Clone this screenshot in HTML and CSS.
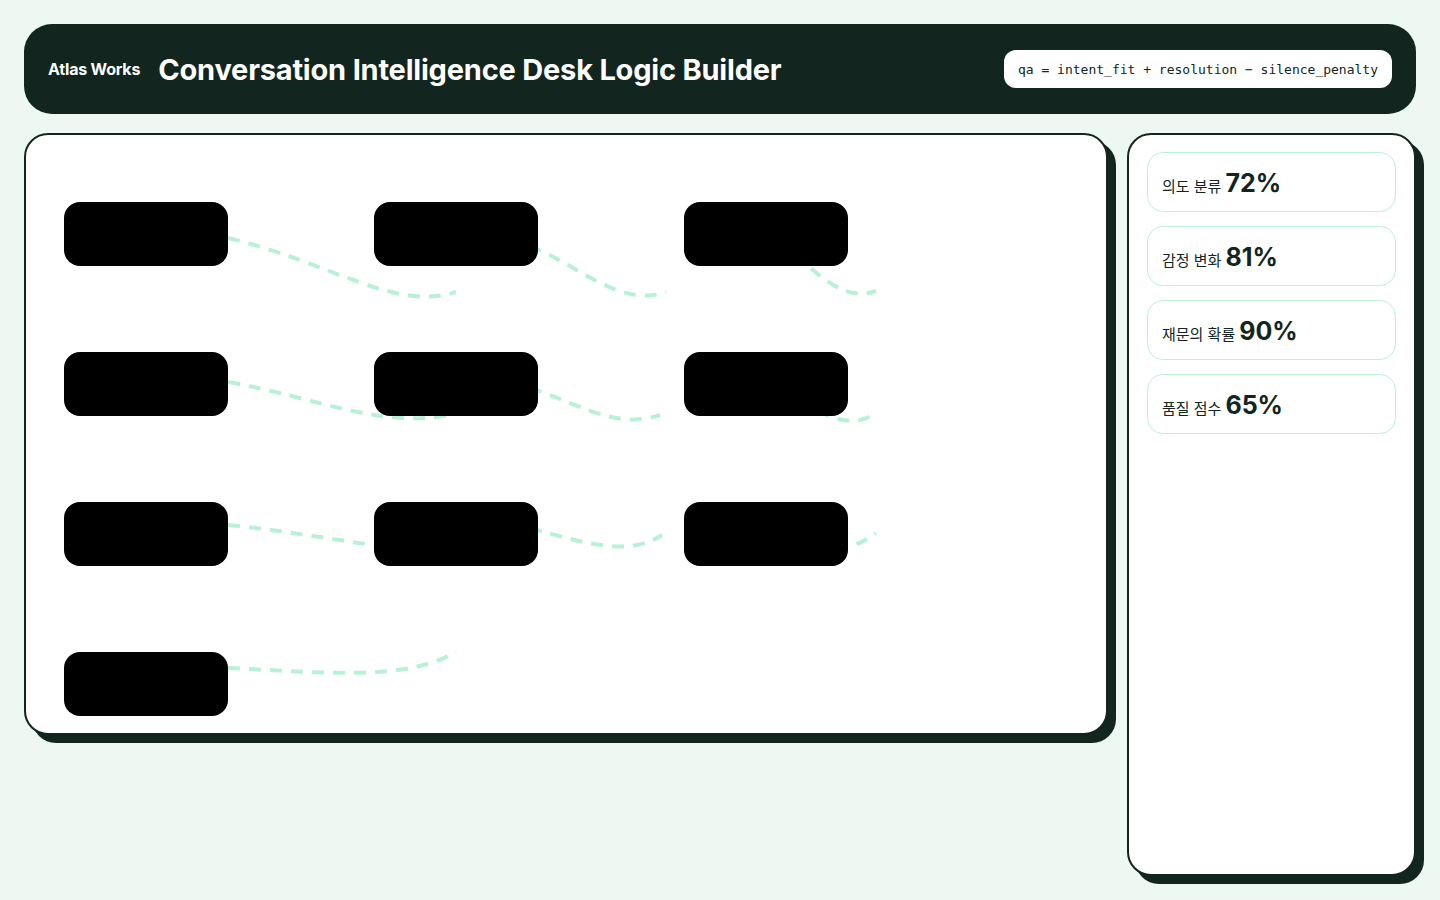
FILE: index.html
```html
<!DOCTYPE html>
<html lang="ko">
<head>
    <meta charset="UTF-8">
    <meta name="viewport" content="width=device-width, initial-scale=1.0">
    <title>Conversation Intelligence Desk Logic Builder</title>
    <link rel="stylesheet" href="styles.css">
</head>
<body>
    <header class="topbar">
        <div class="brand">Atlas Works</div>
        <h1 class="title">Conversation Intelligence Desk Logic Builder</h1>
        <code class="formula">qa = intent_fit + resolution − silence_penalty</code>
    </header>

    <main class="workspace">
        <section class="board">
            <!-- liens entre les blocs, dessinés sous les nœuds -->
            <svg class="links" viewBox="26 135 1080 598">
                <path d="M228 238 C330 262, 395 312, 456 292"/>
                <path d="M530 246 C580 266, 620 308, 666 292"/>
                <path d="M780 240 C820 278, 845 302, 876 291"/>
                <path d="M228 382 C320 398, 380 430, 456 414"/>
                <path d="M530 388 C580 404, 615 430, 660 415"/>
                <path d="M800 400 C830 420, 855 428, 876 413"/>
                <path d="M228 525 C300 532, 360 545, 400 548"/>
                <path d="M530 528 C590 545, 630 556, 662 535"/>
                <path d="M815 548 C845 551, 860 545, 876 533"/>
                <path d="M228 668 C320 672, 405 682, 456 652"/>
            </svg>
            <div class="nodes">
                <div class="node"></div>
                <div class="node"></div>
                <div class="node"></div>
                <div class="node"></div>
                <div class="node"></div>
                <div class="node"></div>
                <div class="node"></div>
                <div class="node"></div>
                <div class="node"></div>
                <div class="node"></div>
            </div>
        </section>

        <aside class="metrics">
            <div class="metric"><span class="metric-label">의도 분류</span><span class="metric-value">72%</span></div>
            <div class="metric"><span class="metric-label">감정 변화</span><span class="metric-value">81%</span></div>
            <div class="metric"><span class="metric-label">재문의 확률</span><span class="metric-value">90%</span></div>
            <div class="metric"><span class="metric-label">품질 점수</span><span class="metric-value">65%</span></div>
        </aside>
    </main>
</body>
</html>
```

FILE: styles.css
```css
* {
    box-sizing: border-box;
}

body {
    margin: 0;
    height: 100vh;
    padding: 24px;
    display: flex;
    flex-direction: column;
    gap: 19px;
    background-color: #eef8f2;
    color: #12251f;
    font-family: Inter, "Noto Sans", "Noto Sans CJK KR", sans-serif;
}

.topbar {
    height: 90px;
    flex-shrink: 0;
    display: flex;
    align-items: center;
    padding: 0 24px;
    border-radius: 28px;
    background-color: #12251f;
    color: white;
}

.brand {
    font-size: 16px;
    font-weight: 700;
    letter-spacing: -0.2px;
    margin-right: 18px;
}

.title {
    margin: 0;
    font-size: 29px;
    font-weight: 700;
    letter-spacing: -0.2px;
}

.formula {
    margin-left: auto;
    height: 38px;
    display: flex;
    align-items: center;
    padding: 0 14px;
    border-radius: 12px;
    background-color: white;
    color: #12251f;
    font-family: "DejaVu Sans Mono", "Liberation Mono", monospace;
    font-size: 13px;
}

.workspace {
    flex: 1;
    display: grid;
    grid-template-columns: 1fr 289px;
    gap: 19px;
    min-height: 0;
}

.board {
    position: relative;
    height: 602px;
    padding: 67px 38px;
    border: 2px solid #12251f;
    border-radius: 24px;
    background-color: white;
    box-shadow: 8px 8px 0 #12251f;
}

.links {
    position: absolute;
    left: 0;
    top: 0;
    width: 100%;
    height: 100%;
}

.links path {
    fill: none;
    stroke: #b8f1d6;
    stroke-width: 4;
    stroke-dasharray: 12 9;
}

.nodes {
    position: relative;
    display: grid;
    grid-template-columns: repeat(3, 164px);
    column-gap: 146px;
    row-gap: 86px;
}

.node {
    height: 64px;
    border-radius: 16px;
    background-color: #000;
}

.metrics {
    display: flex;
    flex-direction: column;
    gap: 14px;
    padding: 17px 18px;
    border: 2px solid #12251f;
    border-radius: 24px;
    background-color: white;
    box-shadow: 8px 8px 0 #12251f;
}

.metric {
    height: 60px;
    display: flex;
    align-items: baseline;
    gap: 4px;
    padding: 14px 14px 0;
    border: 1px solid #bff0d8;
    border-radius: 16px;
}

.metric-label {
    font-family: "Noto Sans CJK KR", sans-serif;
    font-size: 15px;
}

.metric-value {
    font-size: 25px;
    font-weight: 700;
    line-height: 32px;
}
```
